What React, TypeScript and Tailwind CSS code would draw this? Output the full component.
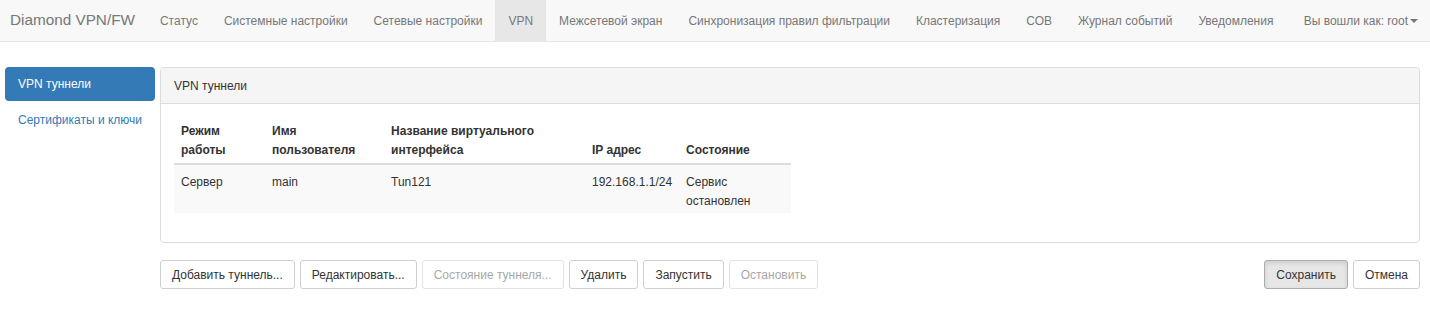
import React from 'react';

const navItems = [
  'Статус',
  'Системные настройки',
  'Сетевые настройки',
  'VPN',
  'Межсетевой экран',
  'Синхронизация правил фильтрации',
  'Кластеризация',
  'СОВ',
  'Журнал событий',
  'Уведомления',
];

const columns = [
  { title: ['Режим', 'работы'], w: 'w-[91px]' },
  { title: ['Имя', 'пользователя'], w: 'w-[119px]' },
  { title: ['Название виртуального', 'интерфейса'], w: 'w-[201px]' },
  { title: ['IP адрес'], w: 'w-[93px]' },
  { title: ['Состояние'], w: 'w-[112px]' },
];

const row = ['Сервер', 'main', 'Tun121', '192.168.1.1/24', 'Сервис остановлен'];

const actions = [
  { label: 'Добавить туннель...', disabled: false },
  { label: 'Редактировать...', disabled: false },
  { label: 'Состояние туннеля...', disabled: true },
  { label: 'Удалить', disabled: false },
  { label: 'Запустить', disabled: false },
  { label: 'Остановить', disabled: true },
];

const Btn = ({ label, disabled, active }: { label: string; disabled?: boolean; active?: boolean }) => (
  <button
    className={`h-[29px] px-[11px] rounded-[3px] border text-[12px] leading-none ${
      active
        ? 'bg-[#e6e6e6] border-[#adadad] text-[#333] shadow-[inset_0_2px_4px_rgba(0,0,0,0.12)]'
        : disabled
        ? 'bg-white border-[#e3e3e3] text-[#a8a8a8]'
        : 'bg-white border-[#cfcfcf] text-[#333]'
    }`}
  >
    {label}
  </button>
);

export default function App() {
  return (
    <div className="w-[1430px] h-[309px] bg-white text-[#333] font-['Liberation_Sans',Arial,sans-serif] text-[12px]">
      {/* Top navbar */}
      <div className="h-[42px] bg-[#f8f8f8] border-b border-[#e7e7e7] flex items-stretch">
        <div className="pl-[10px] pr-[12px] flex items-center text-[15.3px] text-[#777]">Diamond VPN/FW</div>
        <nav className="flex items-stretch">
          {navItems.map((item) => (
            <div
              key={item}
              className={`px-[13px] pt-[1px] flex items-center text-[#777] ${item === 'VPN' ? 'bg-[#e7e7e7] text-[#555]' : ''}`}
            >
              {item}
            </div>
          ))}
        </nav>
        <div className="ml-auto pr-[12px] pl-[12px] pt-[1px] flex items-center text-[#777]">
          Вы вошли как: root
          <span className="ml-[2px] inline-block w-0 h-0 border-x-[4px] border-x-transparent border-t-[4px] border-t-[#777]" />
        </div>
      </div>

      <div className="flex pt-[25px] pr-[10px]">
        {/* Sidebar */}
        <div className="w-[155px] pl-[5px] shrink-0">
          <div className="h-[34px] rounded-[4px] bg-[#337ab7] text-white flex items-center pl-[13px]">VPN туннели</div>
          <div className="h-[38px] flex items-center pl-[13px] text-[#337ab7]">Сертификаты и ключи</div>
        </div>

        {/* Main */}
        <div className="flex-1 ml-[5px]">
          <div className="border border-[#ddd] rounded-[4px] h-[176px]">
            <div className="h-[36px] bg-[#f5f5f5] border-b border-[#ddd] rounded-t-[4px] flex items-center pl-[13px]">
              VPN туннели
            </div>
            <div className="pt-[18px] pl-[13px]">
              <table className="border-collapse">
                <thead>
                  <tr className="border-b-2 border-[#ddd]">
                    {columns.map((c, i) => (
                      <th key={i} className={`${c.w} text-left align-bottom font-bold px-[7px] pb-[3px] leading-[19px]`}>
                        {c.title.map((t) => (
                          <div key={t}>{t}</div>
                        ))}
                      </th>
                    ))}
                  </tr>
                </thead>
                <tbody>
                  <tr className="bg-[#f9f9f9] h-[48px]">
                    {row.map((v, i) => (
                      <td key={i} className="align-top px-[7px] pt-[8px] pb-[2px] leading-[19px]">
                        {i === 4 ? (
                          <>
                            <div>Сервис</div>
                            <div>остановлен</div>
                          </>
                        ) : (
                          v
                        )}
                      </td>
                    ))}
                  </tr>
                </tbody>
              </table>
            </div>
          </div>

          <div className="flex mt-[17px]">
            <div className="flex gap-[5px]">
              {actions.map((a) => (
                <Btn key={a.label} label={a.label} disabled={a.disabled} />
              ))}
            </div>
            <div className="ml-auto flex gap-[5px]">
              <Btn label="Сохранить" active />
              <Btn label="Отмена" />
            </div>
          </div>
        </div>
      </div>
    </div>
  );
}
